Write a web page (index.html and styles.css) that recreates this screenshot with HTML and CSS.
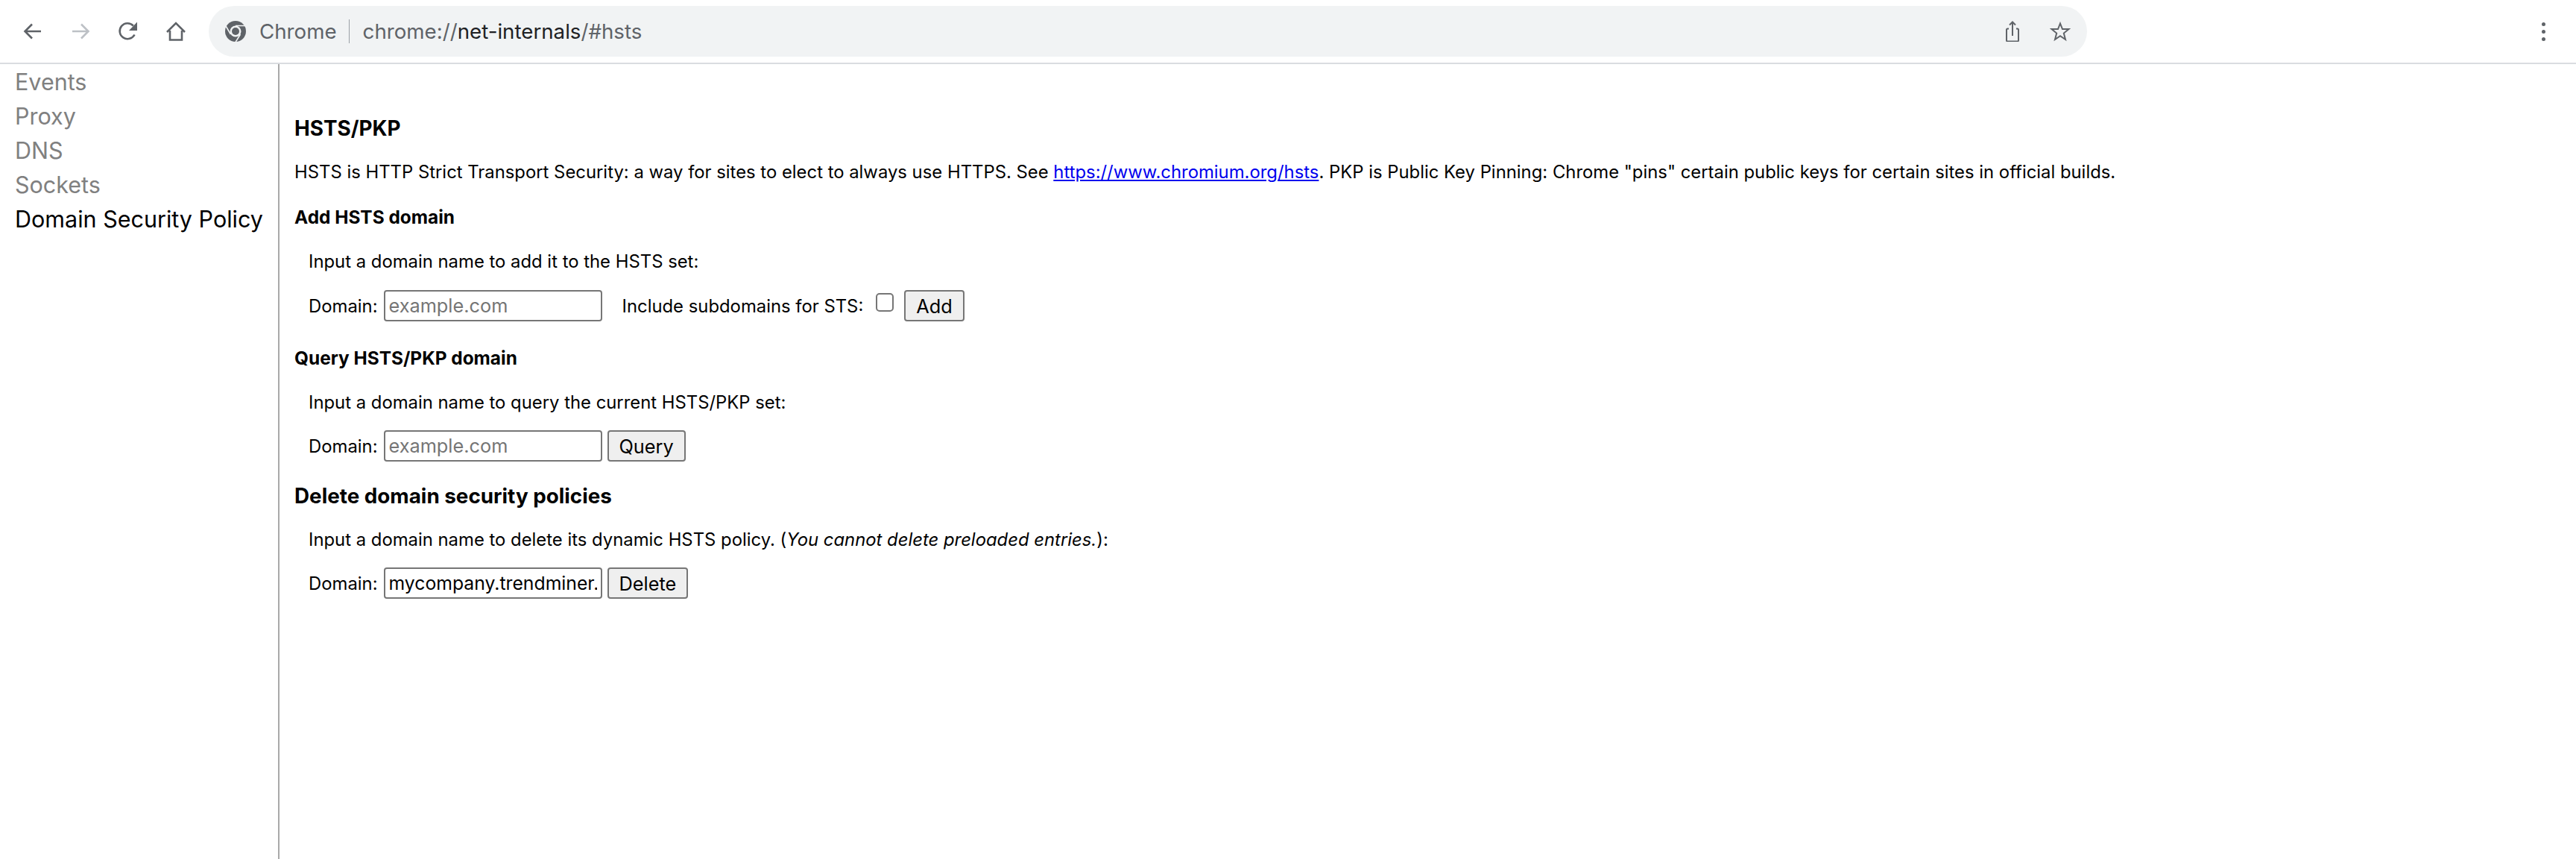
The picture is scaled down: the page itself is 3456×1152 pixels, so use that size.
FILE: index.html
```html
<!DOCTYPE html>
<html lang="en">
<head>
<meta charset="utf-8">
<title>net-internals</title>
<link rel="stylesheet" href="styles.css">
</head>
<body>
<header class="toolbar">
  <nav class="nav-buttons">
    <svg class="icon" viewBox="0 0 28 28"><path d="M25 14H4M13 4.500 3.500 14 13 23.500" class="st"/></svg>
    <svg class="icon" viewBox="0 0 28 28"><path d="M3 14H24M15 4.500 24.500 14 15 23.500" class="st dim"/></svg>
    <svg class="icon" viewBox="0 0 28 28"><path d="M22.500 18.500A10.500 10.500 0 1 1 20.800 6.500" class="st"/><path d="M26 1.500V13H15z" class="fl"/></svg>
    <svg class="icon" viewBox="0 0 28 28"><path d="M6 13V25.500H22V13M2 15 14 3 26 15" class="st"/></svg>
  </nav>
  <div class="omnibox">
    <svg class="chrome-logo" viewBox="0 0 28 28"><circle cx="14" cy="14" r="14" class="fl"/><circle cx="14" cy="14" r="7.500" fill="#f1f3f4"/><circle cx="14" cy="14" r="5" class="fl"/><path d="M14 6.500H27M7.500 18 1 7M20.500 18 14 28.500" class="cut"/></svg>
    <span class="scheme-label">Chrome</span>
    <span class="sep"></span>
    <span class="url">chrome://<b>net-internals</b>/#hsts</span>
    <span class="spacer"></span>
    <svg class="icon omni-icon" viewBox="0 0 28 28"><path d="M9 10.500H7.500A1.500 1.500 0 0 0 6 12V26a1.500 1.500 0 0 0 1.500 1.500h13A1.500 1.500 0 0 0 22 26V12a1.500 1.500 0 0 0-1.500-1.500H19M14 20V1.500M10 5.500 14 1.500 18 5.500" class="st thin"/></svg>
    <svg class="icon omni-icon" viewBox="0 0 28 28"><path d="M14 3.500 17 11H25.500L18.800 16.500 21 25 14 20.200 7 25 9.200 16.500 2.500 11H11z" class="st thin"/></svg>
  </div>
  <div class="menu"><i></i><i></i><i></i></div>
</header>
<div class="layout">
  <aside class="tabs">
    <a>Events</a><a>Proxy</a><a>DNS</a><a>Sockets</a><a class="selected">Domain Security Policy</a>
  </aside>
  <main class="content">
    <h2>HSTS/PKP</h2>
    <p class="intro">HSTS is HTTP Strict Transport Security: a way for sites to elect to always use HTTPS. See <a href="#">https://www.chromium.org/hsts</a>. PKP is Public Key Pinning: Chrome "pins" certain public keys for certain sites in official builds.</p>
    <h3>Add HSTS domain</h3>
    <p class="hint">Input a domain name to add it to the HSTS set:</p>
    <form class="row">
      <label>Domain:</label><input type="text" placeholder="example.com">
      <label class="sts">Include subdomains for STS:</label><span class="check"></span><button type="button">Add</button>
    </form>
    <h3 class="query">Query HSTS/PKP domain</h3>
    <p class="hint">Input a domain name to query the current HSTS/PKP set:</p>
    <form class="row tight">
      <label>Domain:</label><input type="text" placeholder="example.com"><button type="button">Query</button>
    </form>
    <h2 class="del">Delete domain security policies</h2>
    <p class="hint del-hint">Input a domain name to delete its dynamic HSTS policy. (<em>You cannot delete preloaded entries.</em>):</p>
    <form class="row del-row">
      <label>Domain:</label><input type="text" value="mycompany.trendminer.com"><button type="button">Delete</button>
    </form>
  </main>
</div>
</body>
</html>
```
FILE: styles.css
```css
* { box-sizing: border-box; }
html, body { height: 100%; }
body { margin: 0; background: #fff; color: #000; font-family: Inter, "Liberation Sans", Arial, sans-serif; overflow: hidden; }
.toolbar { height: 86px; display: flex; align-items: flex-start; border-bottom: 2px solid #dadce0; padding-top: 8px; }
.nav-buttons { display: flex; width: 280px; height: 68px; align-items: center; padding-left: 30px; gap: 36px; }
.icon { width: 28px; height: 28px; flex: none; }
.st { fill: none; stroke: #5f6368; stroke-width: 2.6; }
.thin { stroke-width: 2; }
.dim { stroke: #bdc1c6; }
.fl { fill: #5f6368; }
.cut { stroke: #f1f3f4; stroke-width: 1.6; fill: none; }
.omnibox { width: 2520px; height: 68px; background: #f1f3f4; border-radius: 34px; display: flex; align-items: center; padding-left: 22px; padding-right: 22px; font-size: 27.700px; color: #5f6368; }
.chrome-logo { width: 28px; height: 28px; flex: none; }
.scheme-label { margin-left: 18px; }
.sep { width: 1px; height: 32px; background: #9aa0a6; margin: 0 18px 0 16px; }
.url b { font-weight: normal; color: #202124; }
.spacer { flex: 1; }
.omni-icon { margin-left: 36px; }
.menu { margin-left: auto; margin-right: 10px; width: 68px; height: 68px; display: flex; flex-direction: column; align-items: center; justify-content: center; gap: 5px; }
.menu i { width: 5px; height: 5px; border-radius: 50%; background: #5f6368; }
.layout { display: flex; height: 1066px; }
.tabs { width: 375px; flex: none; border-right: 2px solid #a9a9a9; padding: 1px 0 0 20px; display: flex; flex-direction: column; }
.tabs a { font-size: 30.500px; line-height: 46px; color: #808080; white-space: nowrap; }
.tabs a.selected { color: #000; }
.content { padding-left: 20px; font-size: 23.850px; }
.content h2 { font-size: 27.800px; line-height: 34px; margin: 69px 0 0; font-weight: bold; }
.content h3 { font-size: 24.400px; line-height: 28px; margin: 32px 0 0; font-weight: bold; }
.content p { margin: 0; line-height: 28px; }
.content .intro { margin-top: 28px; }
.content .hint { margin: 32px 0 0 19px; }
.row { display: flex; align-items: center; margin: 24px 0 0 19px; height: 42px; }
.row label { margin-right: 8px; }
.row input { width: 293px; height: 42px; border: 2px solid #767676; border-radius: 4px; padding: 0 5px; font: inherit; font-size: 24.750px; color: #000; background: #fff; outline: none; }
.row input::placeholder { color: #757575; font-size: 25.300px; }
.row button { height: 42px; margin-left: 7px; border: 2px solid #767676; border-radius: 4px; background: #efefef; font: inherit; font-size: 25.300px; color: #000; padding: 0 14px; }
.row .sts { margin-left: 27px; margin-right: 17px; }
.check { width: 24px; height: 25px; border: 2px solid #767676; border-radius: 5px; background: #fff; margin-bottom: 9px; flex: none; }
.check + button { margin-left: 14px; }
.content .query { margin-top: 35px; }
.row.tight { margin-top: 23px; }
.content .del { margin-top: 29px; }
.content .del-hint { margin-top: 28px; }
.row.del-row { margin-top: 23px; }
a[href] { color: #0000ee; }
```
